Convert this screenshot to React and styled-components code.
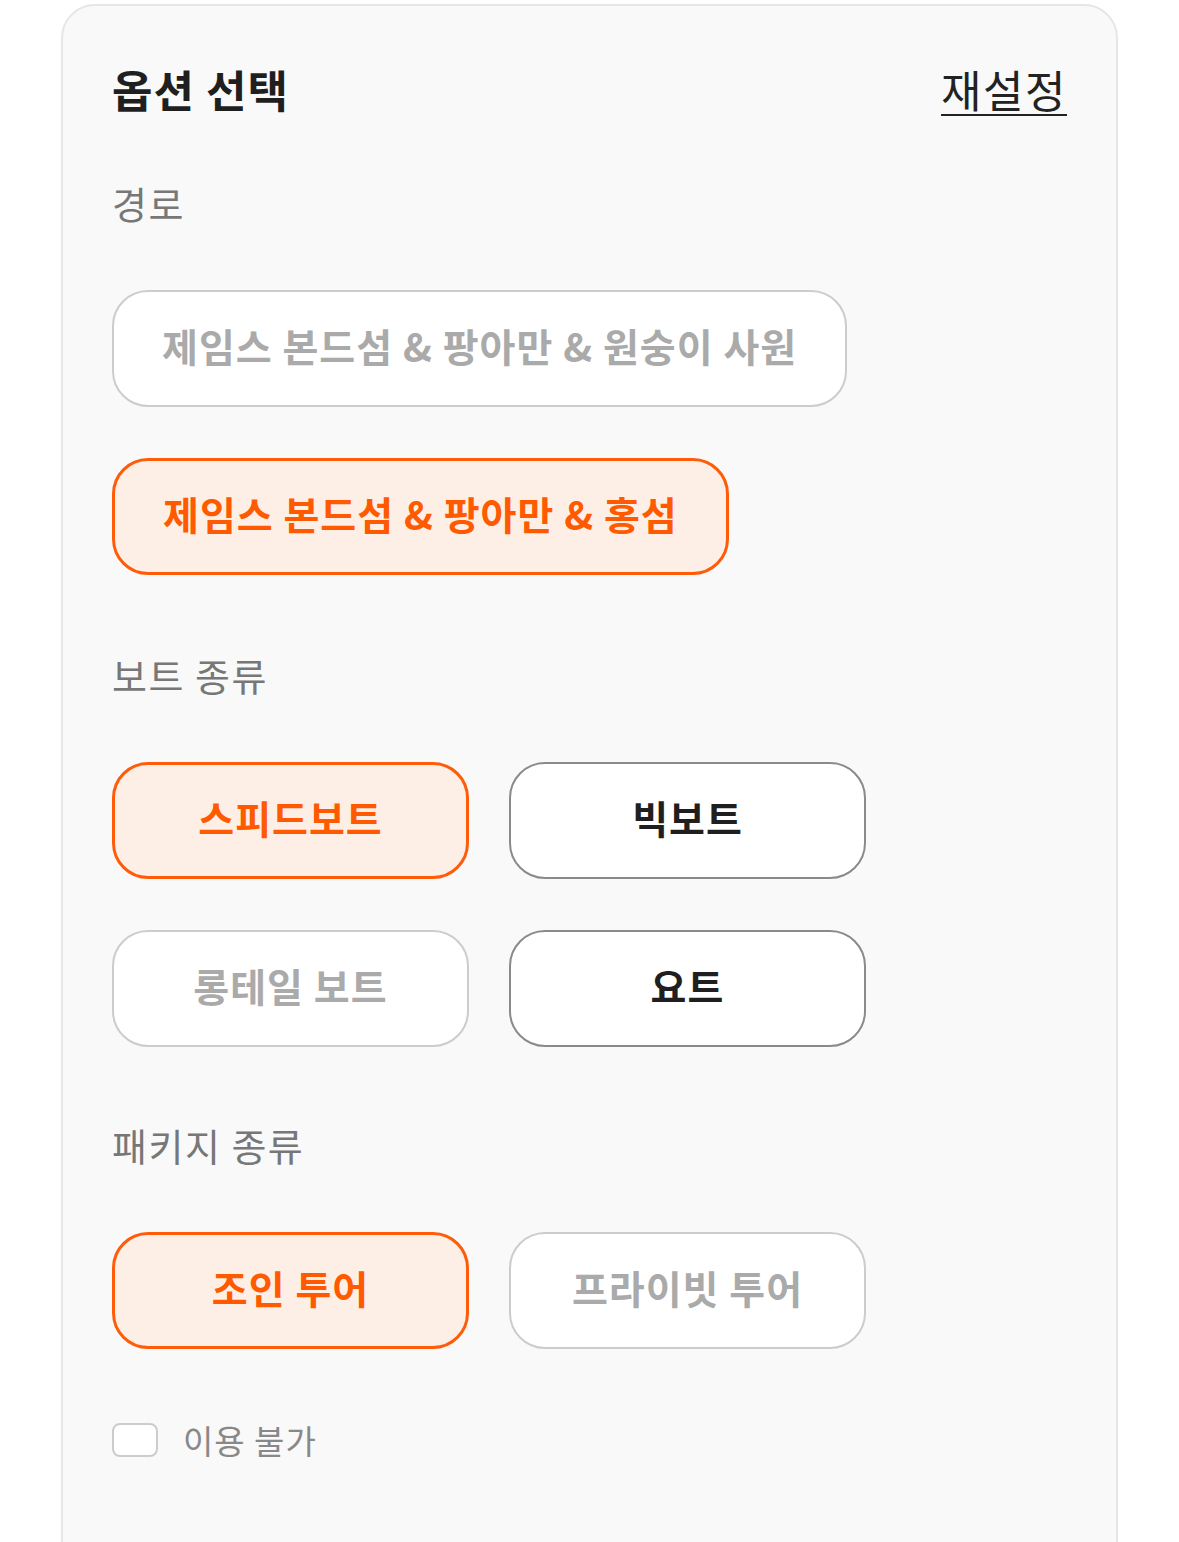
import React, { useState } from 'react'
import styled, { createGlobalStyle, css } from 'styled-components'

const GlobalStyle = createGlobalStyle`
  html, body {
    margin: 0;
    padding: 0;
    background: #ffffff;
  }
  body {
    font-family: "Noto Sans CJK KR", "Noto Sans", sans-serif;
    color: #222;
  }
  * {
    box-sizing: border-box;
  }
`

const Card = styled.div`
  width: 1057px;
  margin: 4px auto 0;
  padding: 53px 49px 120px;
  background: #f9f9f9;
  border: 2px solid #e6e6e6;
  border-radius: 34px;
`

const Header = styled.div`
  display: flex;
  justify-content: space-between;
  align-items: center;
  height: 60px;
`

const Title = styled.h2`
  margin: 0;
  font-size: 44px;
  line-height: 60px;
  font-weight: 700;
  letter-spacing: 1px;
  color: #1f1f1f;
`

const Reset = styled.button`
  border: 0;
  padding: 0;
  background: none;
  font-family: inherit;
  font-size: 44px;
  line-height: 60px;
  font-weight: 400;
  letter-spacing: 1.5px;
  color: #222;
  text-decoration: underline;
  text-decoration-thickness: 2px;
  text-underline-offset: 6px;
  cursor: pointer;
`

const Section = styled.section`
  margin-top: ${p => p.$gap}px;
`

const Label = styled.div`
  font-size: 38px;
  line-height: 50px;
  letter-spacing: 1.5px;
  color: #777;
  margin-bottom: 62px;
`

const Stack = styled.div`
  display: flex;
  flex-direction: column;
  align-items: flex-start;
  gap: 51px;
`

const Grid = styled.div`
  display: grid;
  grid-template-columns: 357px 357px;
  column-gap: 40px;
  row-gap: 51px;
`

const states = {
  selected: css`
    border: 3px solid #ff5c0a;
    background: #fdefe5;
    color: #ff5a00;
  `,
  normal: css`
    border: 2px solid #8a8a8a;
    background: #ffffff;
    color: #1f1f1f;
  `,
  disabled: css`
    border: 2px solid #cccccc;
    background: #ffffff;
    color: #aaaaaa;
  `,
}

const Chip = styled.button`
  height: 117px;
  padding: 0 ${p => (p.$wide ? 48 : 0)}px 6px;
  border-radius: 36px;
  font-family: inherit;
  font-size: 39px;
  font-weight: 700;
  letter-spacing: 1px;
  line-height: 1;
  display: flex;
  align-items: center;
  justify-content: ${p => (p.$wide ? 'flex-start' : 'center')};
  white-space: nowrap;
  cursor: pointer;
  ${p => states[p.$state]}
`

const CheckRow = styled.label`
  display: flex;
  align-items: center;
  gap: 25px;
  margin-top: 74px;
  cursor: pointer;
`

const Box = styled.span`
  width: 46px;
  height: 34px;
  border: 2px solid #cccccc;
  border-radius: 8px;
  background: #ffffff;
`

const CheckText = styled.span`
  font-size: 33px;
  line-height: 34px;
  letter-spacing: 1px;
  color: #888;
`

const routes = [
  { id: 'r1', name: '제임스 본드섬 & 팡아만 & 원숭이 사원', state: 'disabled' },
  { id: 'r2', name: '제임스 본드섬 & 팡아만 & 홍섬', state: 'selected' },
]

const boats = [
  { id: 'b1', name: '스피드보트', state: 'selected' },
  { id: 'b2', name: '빅보트', state: 'normal' },
  { id: 'b3', name: '롱테일 보트', state: 'disabled' },
  { id: 'b4', name: '요트', state: 'normal' },
]

const packages = [
  { id: 'p1', name: '조인 투어', state: 'selected' },
  { id: 'p2', name: '프라이빗 투어', state: 'disabled' },
]

export default () => {
  const [unavailable, setUnavailable] = useState(false)

  return (
    <>
      <GlobalStyle />
      <Card>
        <Header>
          <Title>옵션 선택</Title>
          <Reset>재설정</Reset>
        </Header>

        <Section $gap={59}>
          <Label>경로</Label>
          <Stack>
            {routes.map(r => (
              <Chip key={r.id} $wide $state={r.state}>
                {r.name}
              </Chip>
            ))}
          </Stack>
        </Section>

        <Section $gap={75}>
          <Label>보트 종류</Label>
          <Grid>
            {boats.map(b => (
              <Chip key={b.id} $state={b.state}>
                {b.name}
              </Chip>
            ))}
          </Grid>
        </Section>

        <Section $gap={73}>
          <Label>패키지 종류</Label>
          <Grid>
            {packages.map(p => (
              <Chip key={p.id} $state={p.state}>
                {p.name}
              </Chip>
            ))}
          </Grid>
        </Section>

        <CheckRow onClick={() => setUnavailable(!unavailable)}>
          <Box />
          <CheckText>이용 불가</CheckText>
        </CheckRow>
      </Card>
    </>
  )
}
